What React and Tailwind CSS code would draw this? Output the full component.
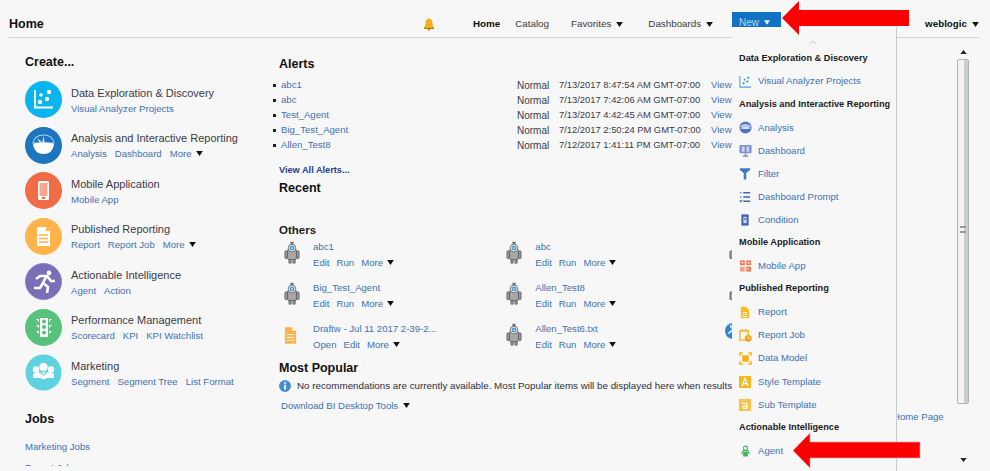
import React from "react";

const Caret = ({ className = "" }) => (
  <svg viewBox="0 0 8 6" className={"inline-block w-[7px] h-[5px] " + className}>
    <path d="M0 0H8L4 6Z" fill="#111" />
  </svg>
);

const Link = ({ children, className = "" }) => (
  <span className={"text-[#3f72b4] whitespace-nowrap " + className}>{children}</span>
);

const More = () => (
  <span className="flex items-center gap-[4px]">
    <Link>More</Link>
    <Caret />
  </span>
);

const DataIcon = () => (
  <svg viewBox="0 0 37 37" className="w-[37px] h-[37px]">
    <circle cx="18.5" cy="18.5" r="18.5" fill="#0ab4ee" />
    <path d="M10 9V26.5H28" fill="none" stroke="#fff" strokeWidth="2" />
    <circle cx="24" cy="11" r="2.2" fill="#fff" />
    <circle cx="16" cy="14" r="1.8" fill="#fff" />
    <circle cx="22" cy="18" r="2.2" fill="#fff" />
    <circle cx="15" cy="21" r="2.2" fill="#fff" />
  </svg>
);

const AnalysisIcon = () => (
  <svg viewBox="0 0 37 37" className="w-[37px] h-[37px]">
    <circle cx="18.5" cy="18.5" r="18.5" fill="#1c75bf" />
    <path d="M8 16C9 10 14 8 18.5 8S28 10 29 16Z" fill="#1c75bf" stroke="#a9d0ee" strokeWidth="1.2" />
    <path d="M18.5 9L19.5 15H17.5Z" fill="#fff" />
    <path d="M12 11L17 15H14Z" fill="#cfe4f5" />
    <path d="M8 17C12 15 25 15 29 17C28 24 24 27 18.5 27S9 24 8 17Z" fill="#fff" />
  </svg>
);

const MobileIcon = () => (
  <svg viewBox="0 0 37 37" className="w-[37px] h-[37px]">
    <circle cx="18.5" cy="18.5" r="18.5" fill="#f26b47" />
    <rect x="13" y="9" width="11" height="19" rx="1.5" fill="#fff" />
    <rect x="14.5" y="11" width="8" height="13" fill="#f8a68f" />
    <rect x="17" y="25" width="3" height="2" fill="#f26b47" />
  </svg>
);

const ReportIcon = () => (
  <svg viewBox="0 0 37 37" className="w-[37px] h-[37px]">
    <circle cx="18.5" cy="18.5" r="18.5" fill="#feb34b" />
    <path d="M12 9H21L25 13V28H12Z" fill="#fff" />
    <path d="M21 9V13H25" fill="#feb34b" />
    <path d="M14 17H23M14 20.5H23M14 24H23" stroke="#feb34b" strokeWidth="1.4" />
  </svg>
);

const ActionIcon = () => (
  <svg viewBox="0 0 37 37" className="w-[37px] h-[37px]">
    <circle cx="18.5" cy="18.5" r="18" fill="#7b6eb8" stroke="#8f84c6" />
    <circle cx="24" cy="10" r="2.4" fill="#fff" />
    <path d="M11 16L15 13H22L26 18H30M21 14L18 20L23 24L22 30M18 20L15 25H9" fill="none" stroke="#fff" strokeWidth="2.6" />
  </svg>
);

const PerfIcon = () => (
  <svg viewBox="0 0 37 37" className="w-[37px] h-[37px]">
    <circle cx="18.5" cy="18.5" r="18.5" fill="#58c27d" />
    <rect x="15" y="9" width="8" height="19" rx="1" fill="#fff" />
    <circle cx="19" cy="12.5" r="2" fill="#58c27d" />
    <circle cx="19" cy="18" r="2" fill="#58c27d" />
    <circle cx="19" cy="23.5" r="2" fill="#58c27d" />
    <path d="M11 10H14V13ZM27 10H24V13ZM11 16H14V19ZM27 16H24V19ZM11 22H14V25ZM27 22H24V25Z" fill="#fff" />
  </svg>
);

const MarketingIcon = () => (
  <svg viewBox="0 0 37 37" className="w-[37px] h-[37px]">
    <circle cx="18.5" cy="18.5" r="18" fill="#5ed2df" />
    <circle cx="18.5" cy="13" r="4.2" fill="#fff" />
    <circle cx="11" cy="15.5" r="3.2" fill="#fff" />
    <circle cx="26" cy="15.5" r="3.2" fill="#fff" />
    <path d="M8 24V20L11 18.5H26L29 20V24H22L18.5 25.5L15 24Z" fill="#fff" />
    <path d="M15.5 18.5L18.5 21.5L21.5 18.5" fill="none" stroke="#5ed2df" strokeWidth="1" />
  </svg>
);

const Robot = () => (
  <svg viewBox="0 0 18 26" className="w-[16px] h-[25px]">
    <path d="M7 1H11L10.5 4H7.5Z" fill="#777" />
    <rect x="4" y="9" width="10" height="12" rx="2" fill="#a8a8a8" stroke="#555" strokeWidth=".7" />
    <rect x="1" y="11" width="3" height="9" rx="1.5" fill="#999" stroke="#444" strokeWidth=".7" />
    <rect x="14" y="11" width="3" height="9" rx="1.5" fill="#999" stroke="#444" strokeWidth=".7" />
    <rect x="5.5" y="21" width="2.6" height="4" fill="#888" stroke="#444" strokeWidth=".5" />
    <rect x="10" y="21" width="2.6" height="4" fill="#888" stroke="#444" strokeWidth=".5" />
    <circle cx="9" cy="8" r="4.4" fill="#ddd" stroke="#555" strokeWidth=".8" />
    <circle cx="9" cy="8" r="2.6" fill="#3d9ad6" />
    <circle cx="9" cy="8" r="1" fill="#e8f4fb" />
  </svg>
);

const DraftIcon = () => (
  <svg viewBox="0 0 14 20" className="w-[13px] h-[19px]">
    <path d="M1 1H9L13 5V19H1Z" fill="#fdb24a" />
    <path d="M9 1V5H13Z" fill="#fff" />
    <path d="M3 9H11M3 12H11M3 15H11" stroke="#fff" strokeWidth="1" />
  </svg>
);

const GlobeIcon = () => (
  <svg viewBox="0 0 16 16" className="w-[16px] h-[16px]">
    <circle cx="8" cy="8" r="8" fill="#2f86d6" />
    <path d="M6 1C4 3 5 5 7 6C6 8 3 8 3 11C5 11 7 9 8 7Z" fill="#cfe6f8" />
  </svg>
);

const InfoIcon = () => (
  <svg viewBox="0 0 13 13" className="w-[12px] h-[12px]">
    <circle cx="6.5" cy="6.5" r="6" fill="#3f8fd8" stroke="#2b6fb2" strokeWidth=".6" />
    <rect x="5.6" y="2.4" width="1.8" height="1.8" fill="#fff" />
    <rect x="5.6" y="5.2" width="1.8" height="5.2" fill="#fff" />
  </svg>
);

const BellIcon = () => (
  <svg viewBox="0 0 12 13" className="w-[12px] h-[13px]">
    <path d="M6 1C3.6 1 3 3 3 5C3 8 2 9 1 10H11C10 9 9 8 9 5C9 3 8.4 1 6 1Z" fill="#f2b61c" stroke="#c98a08" strokeWidth=".6" />
    <rect x="1" y="10" width="10" height="1" fill="#b87b08" />
    <circle cx="6" cy="11.8" r="1.1" fill="#d8900c" />
  </svg>
);

const menuIcons = {
  visual: (
    <svg viewBox="0 0 14 14" className="w-[13px] h-[13px]">
      <path d="M1 1V13H13" fill="none" stroke="#4aa6e0" strokeWidth="1.2" />
      <circle cx="10" cy="3" r="1.1" fill="#2a8fd4" />
      <circle cx="6" cy="5" r="1" fill="#2a8fd4" />
      <circle cx="9" cy="7" r="1.1" fill="#2a8fd4" />
      <circle cx="5" cy="9" r="1.1" fill="#2a8fd4" />
    </svg>
  ),
  analysis: (
    <svg viewBox="0 0 14 14" className="w-[13px] h-[13px]">
      <circle cx="7" cy="7" r="6.5" fill="#4c74c9" />
      <path d="M1 6.5C2 2 12 2 13 6.5Z" fill="#b4c6ea" />
      <path d="M1.5 7.5C4 6 10 6 12.5 7.5C11 9 3 9 1.5 7.5Z" fill="#e4ebf8" />
    </svg>
  ),
  dashboard: (
    <svg viewBox="0 0 14 14" className="w-[13px] h-[13px]">
      <rect x=".5" y="1" width="13" height="9" rx="1" fill="#7a90d0" />
      <path d="M3 3.5H6M8 3.5H11M3 5.5H6M8 5.5H11M3 7.5H6M8 7.5H11" stroke="#fff" strokeWidth="1.2" />
      <path d="M7 10V12.5M4 13H10" stroke="#6c82c6" strokeWidth="1.2" />
    </svg>
  ),
  filter: (
    <svg viewBox="0 0 14 14" className="w-[12px] h-[13px]">
      <path d="M1 1H13V3L8.5 6.5V14H5.5V6.5L1 3Z" fill="#3e7cc2" />
    </svg>
  ),
  prompt: (
    <svg viewBox="0 0 14 14" className="w-[12px] h-[12px]">
      <path d="M5 2H13M5 7H13M5 12H13" stroke="#3468b8" strokeWidth="1.6" />
      <path d="M1 2H3M1 7H3M1 11L2 12.5L3.6 10.5" stroke="#3468b8" strokeWidth="1.3" fill="none" />
    </svg>
  ),
  condition: (
    <svg viewBox="0 0 10 14" className="w-[8px] h-[12px] ml-[2px]">
      <rect x=".5" y="0" width="9" height="14" fill="#3e5fbc" />
      <rect x="3" y="3" width="4" height="8" fill="#cfd8f0" />
      <rect x="4" y="5" width="2" height="2" fill="#3e5fbc" />
    </svg>
  ),
  mobile: (
    <svg viewBox="0 0 14 14" className="w-[13px] h-[12px]">
      <rect x=".5" y=".5" width="5.6" height="5.6" fill="#f2764f" />
      <rect x="7.9" y=".5" width="5.6" height="5.6" fill="#f2764f" />
      <rect x=".5" y="7.9" width="5.6" height="5.6" fill="#f2a088" />
      <rect x="7.9" y="7.9" width="5.6" height="5.6" fill="#f2764f" />
      <rect x="2" y="2.6" width="2.6" height="1.4" fill="#fff" />
      <rect x="9.5" y="2.6" width="2.6" height="1.4" fill="#fff" />
      <rect x="9.5" y="9.6" width="1.6" height="1.6" fill="#fff" />
    </svg>
  ),
  report: (
    <svg viewBox="0 0 12 14" className="w-[10px] h-[13px] ml-[1px]">
      <path d="M1 0H7L11 4V14H1Z" fill="#fcb827" />
      <path d="M3 7H9M3 9.5H9M3 12H9" stroke="#fff" strokeWidth="1" />
    </svg>
  ),
  reportJob: (
    <svg viewBox="0 0 14 14" className="w-[13px] h-[13px]">
      <rect x="1" y="2" width="9" height="10" fill="none" stroke="#f2b01f" strokeWidth="1.4" />
      <path d="M3.5 0V3M7.5 0V3" stroke="#f2b01f" strokeWidth="1.2" />
      <circle cx="10" cy="10" r="3.6" fill="#f2a50c" />
      <path d="M10 8V10H12" stroke="#fff" strokeWidth=".9" fill="none" />
    </svg>
  ),
  dataModel: (
    <svg viewBox="0 0 14 14" className="w-[13px] h-[13px]">
      <path d="M1 4V1H4M10 1H13V4M13 10V13H10M4 13H1V10" fill="none" stroke="#f9b214" strokeWidth="1.6" />
      <rect x="3.5" y="3.5" width="7" height="7" fill="#f9b214" />
    </svg>
  ),
  styleT: (
    <svg viewBox="0 0 14 14" className="w-[12px] h-[12px]">
      <rect width="14" height="14" fill="#fbb81e" />
      <path d="M3.5 12L7 2.5L10.5 12M5 9H9" fill="none" stroke="#fff" strokeWidth="1.4" />
    </svg>
  ),
  subT: (
    <svg viewBox="0 0 14 14" className="w-[12px] h-[12px]">
      <rect width="14" height="14" fill="#fbc24a" />
      <path d="M4 5.5C5 4.5 9 4 9.5 6V11M9.5 8H6.5C4 8 4 11 6.5 11H9.5" fill="none" stroke="#fff" strokeWidth="1.4" />
    </svg>
  ),
  agent: (
    <svg viewBox="0 0 14 14" className="w-[11px] h-[12px] ml-[1px]">
      <circle cx="7" cy="3.4" r="2.6" fill="none" stroke="#39b55a" strokeWidth="1.3" />
      <path d="M2 11L4 6.5H10L12 11" fill="none" stroke="#39b55a" strokeWidth="1.4" />
      <rect x="4" y="8" width="6" height="6" fill="#39b55a" />
    </svg>
  ),
};

const createItems = [
  { icon: <DataIcon />, title: "Data Exploration & Discovery", links: ["Visual Analyzer Projects"] },
  { icon: <AnalysisIcon />, title: "Analysis and Interactive Reporting", links: ["Analysis", "Dashboard"], more: true },
  { icon: <MobileIcon />, title: "Mobile Application", links: ["Mobile App"] },
  { icon: <ReportIcon />, title: "Published Reporting", links: ["Report", "Report Job"], more: true },
  { icon: <ActionIcon />, title: "Actionable Intelligence", links: ["Agent", "Action"] },
  { icon: <PerfIcon />, title: "Performance Management", links: ["Scorecard", "KPI", "KPI Watchlist"] },
  { icon: <MarketingIcon />, title: "Marketing", links: ["Segment", "Segment Tree", "List Format"] },
];

const alerts = [
  ["abc1", "7/13/2017 8:47:54 AM GMT-07:00"],
  ["abc", "7/13/2017 7:42:06 AM GMT-07:00"],
  ["Test_Agent", "7/13/2017 4:42:45 AM GMT-07:00"],
  ["Big_Test_Agent", "7/12/2017 2:50:24 PM GMT-07:00"],
  ["Allen_Test8", "7/12/2017 1:41:11 PM GMT-07:00"],
];

const others = [
  { name: "abc1", actions: ["Edit", "Run"] },
  { name: "abc", actions: ["Edit", "Run"] },
  { hidden: "robot" },
  { name: "Big_Test_Agent", actions: ["Edit", "Run"] },
  { name: "Allen_Test8", actions: ["Edit", "Run"] },
  { hidden: "robot" },
  { name: "Draftw - Jul 11 2017 2-39-2...", actions: ["Open", "Edit"], draft: true },
  { name: "Allen_Test6.txt", actions: ["Edit", "Run"] },
  { hidden: "globe" },
];

const menu = [
  { head: "Data Exploration & Discovery" },
  { icon: "visual", label: "Visual Analyzer Projects" },
  { head: "Analysis and Interactive Reporting" },
  { icon: "analysis", label: "Analysis" },
  { icon: "dashboard", label: "Dashboard" },
  { icon: "filter", label: "Filter" },
  { icon: "prompt", label: "Dashboard Prompt" },
  { icon: "condition", label: "Condition" },
  { head: "Mobile Application" },
  { icon: "mobile", label: "Mobile App" },
  { head: "Published Reporting" },
  { icon: "report", label: "Report" },
  { icon: "reportJob", label: "Report Job" },
  { icon: "dataModel", label: "Data Model" },
  { icon: "styleT", label: "Style Template" },
  { icon: "subT", label: "Sub Template" },
  { head: "Actionable Intelligence" },
  { icon: "agent", label: "Agent" },
];

const SectionTitle = ({ children, className = "" }) => (
  <div className={"font-bold text-[#111] text-[12.5px] leading-[16px] " + className}>{children}</div>
);

const App = () => {
  return (
    <div className="relative w-[990px] h-[471px] overflow-hidden bg-[#f7f7f7] font-['Liberation_Sans',Arial,sans-serif] text-[9.6px] text-[#3b3b47]">
      {/* header */}
      <div className="ml-[9px] mr-[11px] h-[38px] pt-[11px] border-b border-[#ccd6e2] flex items-center">
        <div className="font-bold text-[12.5px] text-[#111] w-[414px]">Home</div>
        <BellIcon />
        <div className="ml-[38px] font-bold text-[#111] text-[9.8px]">Home</div>
        <div className="ml-[15px] text-[9.8px]">Catalog</div>
        <div className="ml-[22px] flex items-center gap-[5px] text-[9.8px]">Favorites <Caret /></div>
        <div className="ml-[25px] flex items-center gap-[5px] text-[9.8px]">Dashboards <Caret /></div>
        <div className="ml-auto flex items-center gap-[5px] font-bold text-[#111] text-[9.8px]">weblogic <Caret /></div>
      </div>

      <div className="flex">
        {/* left column */}
        <div className="w-[272px] h-[429px] pl-[25px] pt-[16px] overflow-hidden shrink-0">
          <SectionTitle className="mb-[11px]">Create...</SectionTitle>
          <div className="flex flex-col gap-[8.5px]">
            {createItems.map((item) => (
              <div key={item.title} className="flex items-center gap-[9px] h-[37px]">
                {item.icon}
                <div className="mt-[2px]">
                  <div className="text-[11px] leading-[15px]">{item.title}</div>
                  <div className="flex items-center gap-[8px] leading-[15px]">
                    {item.links.map((l) => (
                      <Link key={l}>{l}</Link>
                    ))}
                    {item.more && <More />}
                  </div>
                </div>
              </div>
            ))}
          </div>
          <SectionTitle className="mt-[20px]">Jobs</SectionTitle>
          <div className="mt-[13px] flex flex-col gap-[7px] h-[26px] overflow-hidden leading-[14px]">
            <Link>Marketing Jobs</Link>
            <Link>Report Jobs</Link>
          </div>
        </div>

        {/* middle column */}
        <div className="w-[600px] pl-[7px] pt-[18px] shrink-0 overflow-hidden">
          <SectionTitle>Alerts</SectionTitle>
          <div className="mt-[6px]">
            {alerts.map(([name, time]) => (
              <div key={name} className="flex items-center h-[14.9px] -ml-[7px]">
                <span className="w-[3px] h-[3px] bg-[#222] mr-[5px] ml-[1px] shrink-0" />
                <Link className="w-[236px]">{name}</Link>
                <span className="w-[42px] text-[10px]">Normal</span>
                <span className="w-[152px] text-[9.4px] whitespace-nowrap">{time}</span>
                <Link>View</Link>
              </div>
            ))}
          </div>
          <div className="mt-[11px] font-bold text-[9.2px] text-[#1f3f99] leading-[14px]">View All Alerts...</div>
          <SectionTitle className="mt-[3px]">Recent</SectionTitle>
          <div className="mt-[27px] font-bold text-[#222] text-[11.5px] leading-[14px]">Others</div>
          <div className="grid grid-cols-[222.3px_222.3px_30px] mt-[2px] leading-[15px]">
            {others.map((o, i) =>
              o.hidden ? (
                <div key={i} className="h-[40.7px]">
                  {o.hidden === "robot" ? (
                    <div className="pl-[5px] pt-[1px]"><Robot /></div>
                  ) : (
                    <div className="pl-[1px] pt-[2px]"><GlobeIcon /></div>
                  )}
                </div>
              ) : (
                <div key={i} className="flex h-[40.7px]">
                  <div className="w-[29px] pl-[5px] pt-[1px] shrink-0">
                    {o.draft ? (
                      <div className="pt-[4px]"><DraftIcon /></div>
                    ) : (
                      <Robot />
                    )}
                  </div>
                  <div className="pl-[5px]">
                    <Link className="block">{o.name}</Link>
                    <div className="flex items-center gap-[7px] mt-[1px]">
                      {o.actions.map((a) => (
                        <Link key={a}>{a}</Link>
                      ))}
                      <More />
                    </div>
                  </div>
                </div>
              )
            )}
          </div>
          <SectionTitle className="-mt-[2px]">Most Popular</SectionTitle>
          <div className="flex items-center gap-[6px] mt-[3px] whitespace-nowrap leading-[14px] text-[9.8px] text-[#2f2f3a]">
            <InfoIcon />
            No recommendations are currently available. Most Popular items will be displayed here when results become available.
          </div>
          <div className="mt-[6px] ml-[2px] flex items-center gap-[5px] leading-[14px]">
            <Link>Download BI Desktop Tools</Link>
            <Caret />
          </div>
        </div>
      </div>

      {/* Home Page link and scrollbar behind the menu */}
      <Link className="absolute left-[893px] top-[410px]">Home Page</Link>
      <svg viewBox="0 0 8 5" className="absolute left-[960px] top-[50px] w-[7px] h-[4px]">
        <path d="M0 5H8L4 0Z" fill="#222" />
      </svg>
      <svg viewBox="0 0 8 5" className="absolute left-[960px] top-[458px] w-[7px] h-[4px]">
        <path d="M0 0H8L4 5Z" fill="#222" />
      </svg>
      <div className="absolute left-[957px] top-[59px] w-[12px] h-[345px] rounded-[2px] border border-[#b3b3a6] bg-[#f4f4f2] flex justify-end items-center">
        <div className="w-[4px] h-full bg-[#c6ced6]" />
        <div className="absolute left-[2px] top-[166px] w-[6px] h-[7px] border-y-[2px] border-[#9a9a9a]" />
      </div>

      {/* New dropdown */}
      <div className="absolute left-[732px] top-[27px] w-[165px] h-[444px] bg-[#f7f7f7] border-r border-[#c4ccd6] pl-[7px] pt-[13px]">
        <svg viewBox="0 0 10 6" className="ml-[70px] w-[8px] h-[5px]">
          <path d="M1 5L5 1L9 5" fill="none" stroke="#b8c0c8" strokeWidth="1.2" />
        </svg>
        <div className="mt-[1.9px]">
          {menu.map((m) =>
            m.head ? (
              <div key={m.head} className="h-[23.1px] flex items-center font-bold text-[9.2px] text-[#1b1b24] whitespace-nowrap">
                {m.head}
              </div>
            ) : (
              <div key={m.label} className="h-[23.1px] flex items-center">
                <span className="w-[19px] flex items-center">{menuIcons[m.icon]}</span>
                <Link>{m.label}</Link>
              </div>
            )
          )}
        </div>
      </div>

      <div className="absolute left-[732px] top-[12px] w-[49px] h-[15px] bg-[#0f72c4] pl-[7px] flex items-center gap-[5px] text-[#b9d8f2] text-[10px] pt-[6px]">
        New
        <svg viewBox="0 0 8 6" className="w-[6px] h-[5px]">
          <path d="M0 0H8L4 6Z" fill="#eaf3fb" />
        </svg>
      </div>

      {/* red callout arrows */}
      <svg viewBox="0 0 128 35" className="absolute left-[782px] top-[0px] w-[128px] h-[35px]">
        <path d="M0 18L17 1V10H127V26H17V35Z" fill="#fb0000" />
      </svg>
      <svg viewBox="0 0 128 35" className="absolute left-[793px] top-[433px] w-[128px] h-[35px]">
        <path d="M0 17.5L17 0V9H127V25H17V35Z" fill="#fb0000" stroke="#f8b0b0" strokeWidth=".6" />
      </svg>
    </div>
  );
};

export default App;
